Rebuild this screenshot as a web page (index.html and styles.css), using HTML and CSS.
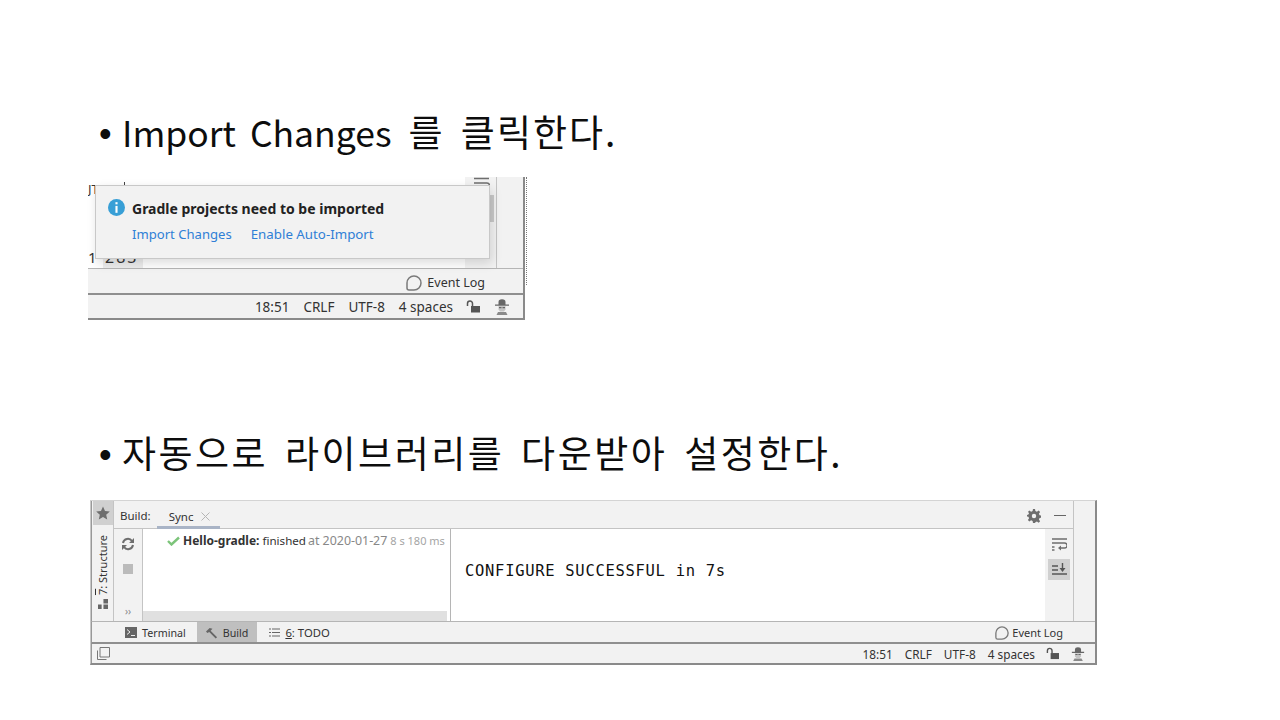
FILE: index.html
```html
<!DOCTYPE html>
<html lang="ko">
<head>
<meta charset="utf-8">
<title>Gradle</title>
<link rel="stylesheet" href="styles.css">
</head>
<body>
<main class="slide">
  <h2 class="bullet first"><span class="dot">•</span><span class="line">Import Changes <span class="ko">를 클릭한다.</span></span></h2>
  <section class="shot1">
    <div class="s1-main">
      <div class="s1-gutter"><span class="frag-top">JT</span><span class="frag-tick"></span><span class="frag-one">1</span><span class="gutter-num">283</span></div>
      <div class="s1-editor"></div>
      <div class="s1-right">
        <svg class="s1-wrap" width="17" height="10" viewBox="0 0 17 10"><path d="M1 1.500h15M1 6h13a2.500 2.500 0 0 1 0 5H9" fill="none" stroke="#6e6e6e" stroke-width="1.500"/></svg>
      </div>
      <div class="s1-far"></div>
    </div>
    <div class="s1-event">
      <svg class="bubble" width="16" height="16" viewBox="0 0 16 16"><path d="M8 1a7 7 0 1 1 0 14H3a2 2 0 0 1-2-2V8A7 7 0 0 1 8 1z" fill="none" stroke="#7a7a7a" stroke-width="1.500"/></svg>
      <span>Event Log</span>
    </div>
    <div class="s1-status">
      <span>18:51</span><span>CRLF</span><span>UTF-8</span><span>4 spaces</span>
      <svg class="lock" width="14" height="13" viewBox="0 0 14 13"><path d="M1.500 6V3.500a2.500 2.500 0 0 1 5 0V6" fill="none" stroke="#555" stroke-width="1.500"/><rect x="5" y="6" width="9" height="6.500" fill="#555"/></svg>
      <svg class="hector" width="16" height="16" viewBox="0 0 16 16"><path d="M4.500 5.500V3a3.500 2.800 0 0 1 7 0v2.500H15v1.300H1V5.500z" fill="#666"/><path d="M4.500 7h7v3.500L10 12.500H6l-1.500-2z" fill="#c4c4c4"/><path d="M5 8h2.500v1.200H5zM8.500 8H11v1.200H8.500z" fill="#666"/><path d="M2.500 16l1.500-3h8l1.500 3z" fill="#8a8a8a"/></svg>
    </div>
    <div class="thumb"></div>
    <aside class="popup">
      <svg class="info" width="17" height="17" viewBox="0 0 16 16"><circle cx="8" cy="8" r="8" fill="#389fd6"/><rect x="7" y="3" width="2" height="2" fill="#fff"/><rect x="7" y="6.500" width="2" height="6.500" fill="#fff"/></svg>
      <div class="popup-body">
        <div class="popup-title">Gradle projects need to be imported</div>
        <div class="popup-links"><a class="lk-import">Import Changes</a><a class="lk-auto">Enable Auto-Import</a></div>
      </div>
    </aside>
  </section>
  <h2 class="bullet second"><span class="dot">•</span><span class="line ko">자동으로 라이브러리를 다운받아 설정한다.</span></h2>
  <section class="shot2">
    <div class="s2-top">
      <div class="s2-strip">
        <div class="star-box"><svg width="14" height="14" viewBox="0 0 14 14"><path d="M7 .5l2 4.500 4.800.5-3.600 3.200 1 4.800L7 11l-4.200 2.500 1-4.800L.2 5.500 5 5z" fill="#6e6e6e"/></svg></div>
        <div class="structure">
          <span class="vert"><u>7</u>: Structure</span>
          <svg width="10" height="10" viewBox="0 0 11 11"><path d="M6 0h5v5H6zM0 6h4v5H0zM6 6h5v5H6z" fill="#666"/></svg>
        </div>
      </div>
      <div class="s2-panel">
        <div class="s2-tabs">
          <span class="tb-label">Build:</span>
          <span class="tb-sync">Sync <svg class="close" width="9" height="9" viewBox="0 0 9 9"><path d="M.5.500l8 8M8.500.500l-8 8" stroke="#b5b5b5"/></svg></span>
          <span class="tb-space"></span>
          <svg width="14" height="14" viewBox="0 0 14 14"><path d="M6 0h2l.4 2 1.500.7L11.700 1.500l1.400 1.400-1.200 1.800.7 1.500 2 .4v2l-2 .4-.7 1.500 1.200 1.800-1.400 1.400-1.800-1.200-1.500.7L8 14H6l-.4-2-1.500-.7-1.800 1.200-1.400-1.400 1.200-1.800-.7-1.500-2-.4V6l2-.4.7-1.500L.9 2.900l1.400-1.400 1.800 1.200 1.500-.7z" fill="#6e6e6e" fill-rule="evenodd"/><circle cx="7" cy="7" r="2.200" fill="#f2f2f2"/></svg>
          <span class="minus"></span>
        </div>
        <div class="s2-body">
          <div class="s2-tools">
            <svg width="14" height="14" viewBox="0 0 14 14"><path d="M2 6a5 5 0 0 1 9-2M12 8a5 5 0 0 1-9 2" fill="none" stroke="#6e6e6e" stroke-width="2"/><path d="M13 1v5H8zM1 13V8h5z" fill="#6e6e6e"/></svg>
            <span class="stop"></span>
            <span class="more">››</span>
          </div>
          <div class="s2-tree">
            <div class="tree-row">
              <svg width="13" height="10" viewBox="0 0 13 10"><path d="M1 5l3.500 3.500L12 1.500" fill="none" stroke="#7cc47a" stroke-width="2.400"/></svg>
              <b>Hello-gradle:</b><span class="fin">finished</span><span class="at">at 2020-01-27</span><span class="ms">8 s 180 ms</span>
            </div>
            <div class="tree-scroll"></div>
          </div>
          <div class="s2-console">CONFIGURE SUCCESSFUL in 7s</div>
          <div class="s2-rtools">
            <span class="rt"><svg width="15" height="13" viewBox="0 0 15 13"><path d="M0 1h15M0 5h12.500a2.500 2.500 0 0 1 0 5H8M0 9h2.500M0 12h2.500" fill="none" stroke="#6e6e6e" stroke-width="1.300"/><path d="M9 7.500v5L6 10z" fill="#6e6e6e"/></svg></span>
            <span class="rt on"><svg width="15" height="13" viewBox="0 0 15 13"><path d="M0 3h6M0 7h6M0 11h15M10.500 0v7" fill="none" stroke="#555" stroke-width="1.400"/><path d="M7.500 5h6l-3 4z" fill="#555"/></svg></span>
          </div>
        </div>
      </div>
      <div class="s2-far"></div>
    </div>
    <div class="s2-toolbar">
      <span class="tw"><svg width="12" height="11" viewBox="0 0 12 11"><rect width="12" height="11" fill="#666"/><path d="M2 2.500L5 5 2 7.500M6 8.500h4" fill="none" stroke="#eee"/></svg>Terminal</span>
      <span class="tw active"><svg width="14" height="12" viewBox="0 0 15 13"><path d="M1 5l4-4 3 1-2 2 7 7-1.500 1.500-7-7-2 1z" fill="#666"/></svg>Build</span>
      <span class="tw todo"><svg width="11" height="9" viewBox="0 0 11 9"><path d="M0 1h2M3 1h8M0 4.500h2M3 4.500h8M0 8h2M3 8h8" stroke="#666"/></svg><span><u>6</u>: TODO</span></span>
      <span class="tb-space"></span>
      <span class="s2-event">
        <svg class="bubble" width="14" height="14" viewBox="0 0 16 16"><path d="M8 1a7 7 0 1 1 0 14H3a2 2 0 0 1-2-2V8A7 7 0 0 1 8 1z" fill="none" stroke="#7a7a7a" stroke-width="1.500"/></svg>Event Log
      </span>
    </div>
    <div class="s2-status">
      <svg class="frame" width="13" height="13" viewBox="0 0 13 13"><path d="M.5 3.500v9h9M3 .5h9.500V10H3z" fill="none" stroke="#777"/></svg>
      <span class="tb-space"></span>
      <span>18:51</span><span>CRLF</span><span>UTF-8</span><span>4 spaces</span>
      <svg class="lock" width="13" height="13" viewBox="0 0 14 13"><path d="M1.500 6V3.500a2.500 2.500 0 0 1 5 0V6" fill="none" stroke="#555" stroke-width="1.500"/><rect x="5" y="6" width="9" height="6.500" fill="#555"/></svg>
      <svg class="hector" width="14" height="14" viewBox="0 0 16 16"><path d="M4.500 5.500V3a3.500 2.800 0 0 1 7 0v2.500H15v1.300H1V5.500z" fill="#666"/><path d="M4.500 7h7v3.500L10 12.500H6l-1.500-2z" fill="#c4c4c4"/><path d="M5 8h2.500v1.200H5zM8.500 8H11v1.200H8.500z" fill="#666"/><path d="M2.500 16l1.500-3h8l1.500 3z" fill="#8a8a8a"/></svg>
    </div>
  </section>
</main>
</body>
</html>
```
FILE: styles.css
```css
* { box-sizing: border-box; }
html, body { margin: 0; padding: 0; background: #fff; }
body { width: 1280px; height: 720px; overflow: hidden; font-family: "Noto Sans", "Noto Sans CJK KR", sans-serif; }
.slide { padding-top: 105px; }
.bullet {
  margin: 0 0 0 99px; display: flex; gap: 14px; height: 52px; align-items: center;
  font-family: "Noto Sans CJK KR", "Noto Sans", sans-serif; font-weight: 400; font-size: 35.500px;
  color: #0d0d0d; line-height: 52px; word-spacing: 4px; white-space: nowrap;
}
.dot { font-family: "Liberation Sans", sans-serif; font-size: 36px; width: 9px; padding-top: 5px; }
.ko { font-size: 37px; letter-spacing: 2px; margin-left: 3px; }
.line.ko { margin-left: 0; letter-spacing: 2.500px; }
.second { margin-top: 106px; }

/* first screenshot */
.shot1 {
  position: relative; margin: 20px 0 0 88px; width: 437px; height: 143px;
  font-size: 13.500px; color: #333; background: #f2f2f2;
  border-right: 2px solid #8a8a8a; border-bottom: 2px solid #8a8a8a;
}
.shot1::after {
  content: ""; position: absolute; top: 0; right: -4px; height: 108px;
  border-right: 1px dotted #777;
}
.s1-main { display: flex; height: 92px; border-bottom: 1px solid #b5b5b5; }
.s1-gutter { position: relative; width: 55px; background: #fff; overflow: hidden; }
.frag-top { position: absolute; left: 0; top: 5px; font-size: 13px; line-height: 15px; width: 15px; }
.frag-tick { position: absolute; left: 36px; top: 5px; width: 1px; height: 3px; background: #444; }
.frag-one { position: absolute; left: 0; bottom: 3px; font-size: 15px; line-height: 16px; }
.gutter-num { position: absolute; left: 15px; right: 0; bottom: 0; height: 30px; padding: 11px 0 0 2px; background: #ededed; font-size: 16px; letter-spacing: 2px; color: #333; line-height: 16px; }
.s1-editor { width: 322px; background: #fff; }
.s1-right { width: 32px; background: #f2f2f2; border-right: 1px solid #c4c4c4; padding: 0 0 0 8px; }
.s1-wrap { display: block; }
.s1-far { flex: 1; background: #f2f2f2; }
.s1-event { height: 26px; display: flex; align-items: center; justify-content: flex-end; gap: 5px; padding: 3px 38px 0 0; border-bottom: 2px solid #8f8f8f; font-size: 12.500px; }
.s1-status { height: 23px; display: flex; align-items: center; justify-content: flex-end; padding-right: 13px; gap: 14px; }
.s1-status .lock { margin-left: -1px; }
.thumb { position: absolute; left: 402px; top: 18px; width: 4px; height: 27px; background: #c9c9c9; }
.popup {
  position: absolute; left: 7px; top: 8px; width: 395px; height: 74px; background: #f2f2f2;
  border: 1px solid #c8c8c8; display: flex; gap: 7px; padding: 13px 12px;
  box-shadow: 2px 4px 10px rgba(0,0,0,.14);
}
.popup-title { font-weight: 700; font-size: 14px; color: #222; line-height: 20px; }
.popup-links { display: flex; gap: 19px; margin-top: 5px; line-height: 20px; color: #2f7fd6; }
.lk-import { font-size: 13.100px; }
.lk-auto { font-size: 13.300px; }

/* second screenshot */
.shot2 {
  margin: 22px 0 0 90px; width: 1007px; height: 165px; font-size: 11.500px; color: #333;
  background: #f2f2f2; border-left: 1px solid #c8c8c8; border-right: 2px solid #8a8a8a;
  border-top: 1px solid #d4d4d4; border-bottom: 2px solid #8a8a8a; display: flex; flex-direction: column;
}
.s2-top { display: flex; height: 121px; border-bottom: 1px solid #b5b5b5; border-left: 1px solid #999; }
.s2-strip { width: 22px; border-right: 1px solid #c4c4c4; display: flex; flex-direction: column; }
.star-box { height: 24px; margin-left: 1px; background: #d0d0d0; display: flex; align-items: center; justify-content: center; }
.structure { flex: 1; display: flex; flex-direction: column; align-items: center; padding-top: 10px; gap: 4px; }
.vert { writing-mode: vertical-rl; transform: rotate(180deg); font-size: 11px; line-height: 14px; }
.s2-panel { width: 959px; display: flex; flex-direction: column; }
.s2-tabs { height: 28px; display: flex; align-items: center; border-bottom: 1px solid #c4c4c4; padding: 2px 7px 0 6px; }
.tb-label { margin-right: 6px; }
.tb-sync { display: flex; align-items: center; gap: 8px; padding: 3px 10px 0 12px; height: 25px; margin-top: 1px; border-bottom: 3px solid #a9b4c6; }
.tb-space { flex: 1; }
.minus { width: 12px; height: 1px; background: #666; margin-left: 13px; }
.s2-body { flex: 1; display: flex; }
.s2-tools { width: 29px; border-right: 1px solid #c4c4c4; display: flex; flex-direction: column; align-items: center; padding-top: 8px; }
.stop { width: 10px; height: 10px; background: #bbb; margin-top: 13px; }
.more { margin-top: auto; font-size: 10px; color: #888; line-height: 20px; }
.s2-tree { width: 308px; background: #fff; border-right: 1px solid #b5b5b5; display: flex; flex-direction: column; }
.tree-row { display: flex; align-items: center; height: 23px; padding-left: 24px; white-space: nowrap; gap: 3px; font-size: 12px; }
.fin { font-size: 11.600px; }
.at { color: #888; font-size: 12.400px; margin-left: -1px; }
.ms { color: #a5a5a5; font-size: 11px; }
.tree-scroll { margin-top: auto; height: 10px; width: 304px; background: #e0e0e0; }
.s2-console { width: 594px; background: #fff; font-family: "DejaVu Sans Mono", monospace; font-size: 15.500px; letter-spacing: .7px; color: #111; padding: 33px 0 0 14px; white-space: nowrap; }
.s2-rtools { flex: 1; display: flex; flex-direction: column; align-items: center; padding-top: 5px; gap: 4px; }
.rt { width: 22px; height: 21px; display: flex; align-items: center; justify-content: center; }
.rt.on { background: #d0d0d0; }
.s2-far { flex: 1; border-left: 1px solid #c4c4c4; }
.s2-toolbar { height: 22px; display: flex; align-items: center; padding-left: 23px; border-bottom: 2px solid #8f8f8f; border-left: 1px solid #999; font-size: 10.700px; }
.tw { display: flex; align-items: center; gap: 5px; height: 100%; padding: 1px 10px 0; }
.tw.active { background: #bfbfbf; padding: 1px 9px 0 8px; margin-left: 1px; gap: 4px; }
.tw.todo { padding-left: 12px; font-size: 11.300px; }
.s2-event { display: flex; align-items: center; gap: 3px; padding: 1px 32px 0 0; font-size: 11px; }
.s2-status { flex: 1; display: flex; align-items: center; gap: 12px; padding: 0 10px 0 5px; border-left: 1px solid #999; font-size: 11.800px; }
.s2-status .lock { margin-left: -1px; }
```
